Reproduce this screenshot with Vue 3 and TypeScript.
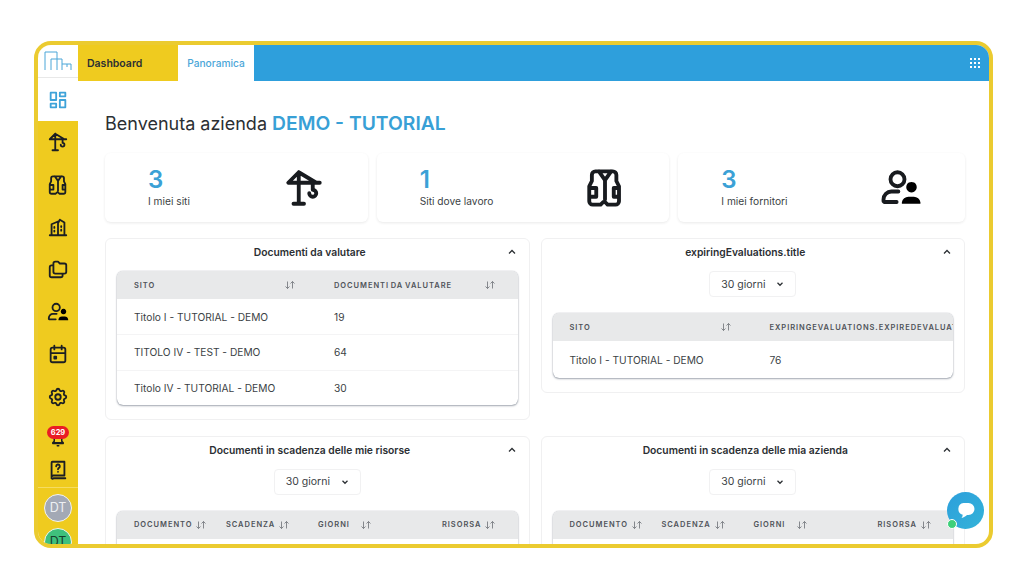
<script setup lang="ts">
interface Stat {
  value: number
  label: string
  icon: string
}

interface Column {
  label: string
  width: string
  headWidth: number
}

interface Panel {
  title: string
  filter: boolean
  columns: Column[]
  rows: string[][]
}

const icons: Record<string, string> = {
  dashboard: 'M4 4h6v8h-6z M4 16h6v4h-6z M14 12h6v8h-6z M14 4h6v4h-6z',
  crane: 'M6 21h6 M9 21v-18l-6 6h18 M9 3l10 6 M17 9v4a2 2 0 1 1 -2 2',
  vest: 'M7.5 2.5h9a2 2 0 0 1 2 2v3.500l1.500 3v8.500a2 2 0 0 1 -2 2h-4.500l-1.500 -1.500h-1l-1.500 1.500h-4.500a2 2 0 0 1 -2 -2v-8.500l1.500 -3v-3.500a2 2 0 0 1 2 -2z M8.500 2.500l3.500 5l3.500 -5 M12 7.500v11 M4 12h3v5h-3 M20 12h-3v5h3',
  building: 'M3 21h18 M5 21v-12l7-3v15 M12 8l2-4l5 3v14 M8 12v1 M8 16v1 M15.5 11v1 M15.5 15v1',
  folders: 'M9 4h3l2 2h5a2 2 0 0 1 2 2v7a2 2 0 0 1 -2 2h-10a2 2 0 0 1 -2 -2v-9a2 2 0 0 1 2 -2 M17 17v2a2 2 0 0 1 -2 2h-10a2 2 0 0 1 -2 -2v-9a2 2 0 0 1 2 -2h2',
  person: 'M6 7a4 4 0 1 0 8 0a4 4 0 1 0 -8 0 M2 19.500v-1a4.500 4.500 0 0 1 4.500 -4.500h4 M2.500 20h7',
  calendar: 'M4 7a2 2 0 0 1 2 -2h12a2 2 0 0 1 2 2v12a2 2 0 0 1 -2 2h-12a2 2 0 0 1 -2 -2z M16 3v4 M8 3v4 M4 11h16 M8 15h2v2h-2z',
  gear: 'M10.325 4.317c.426 -1.756 2.924 -1.756 3.35 0a1.724 1.724 0 0 0 2.573 1.066c1.543 -.94 3.31 .826 2.37 2.37a1.724 1.724 0 0 0 1.065 2.572c1.756 .426 1.756 2.924 0 3.35a1.724 1.724 0 0 0 -1.066 2.573c.94 1.543 -.826 3.31 -2.37 2.37a1.724 1.724 0 0 0 -2.572 1.065c-.426 1.756 -2.924 1.756 -3.35 0a1.724 1.724 0 0 0 -2.573 -1.066c-1.543 .94 -3.31 -.826 -2.37 -2.37a1.724 1.724 0 0 0 -1.065 -2.572c-1.756 -.426 -1.756 -2.924 0 -3.35a1.724 1.724 0 0 0 1.066 -2.573c-.94 -1.543 .826 -3.31 2.37 -2.37c1 .608 2.296 .07 2.572 -1.065z M9 12a3 3 0 1 0 6 0a3 3 0 0 0 -6 0',
  bell: 'M7 9v6l-2 2h14l-2-2v-6 M5 18h14 M11 21h2',
  book: 'M5 20v-16a1 1 0 0 1 1 -1h13v15h-12a2 2 0 0 0 -2 2a1 1 0 0 0 2 1h13 M10 8a2 2 0 1 1 3 1.700c-.7 .4 -1 .8 -1 1.600 M12 14v.01',
  sort: 'M3 15l4 4l4 -4 M7 19v-14 M13 9l4 -4l4 4 M17 5v14',
  chevronUp: 'M6 15l6 -6l6 6',
  chevronDown: 'M6 9l6 6l6 -6',
}

const personSolid = 'M18 8.500a3 3 0 1 1 -.01 0z M12.500 21v-.8a3.800 3.800 0 0 1 3.800 -3.200h3a3.800 3.800 0 0 1 3.800 3.200v.8z'

const navIcons = ['crane', 'vest', 'building', 'folders', 'person', 'calendar', 'gear']

const stats: Stat[] = [
  { value: 3, label: 'I miei siti', icon: 'crane' },
  { value: 1, label: 'Siti dove lavoro', icon: 'vest' },
  { value: 3, label: 'I miei fornitori', icon: 'person' },
]

const sitoColumns = (second: string): Column[] => [
  { label: 'SITO', width: '200px', headWidth: 162 },
  { label: second, width: '1fr', headWidth: 162 },
]

const scadenzaColumns: Column[] = [
  { label: 'DOCUMENTO', width: '92px', headWidth: 73 },
  { label: 'SCADENZA', width: '92px', headWidth: 64 },
  { label: 'GIORNI', width: '124px', headWidth: 54 },
  { label: 'RISORSA', width: '1fr', headWidth: 54 },
]

const panels: Panel[] = [
  {
    title: 'Documenti da valutare',
    filter: false,
    columns: sitoColumns('DOCUMENTI DA VALUTARE'),
    rows: [
      ['Titolo I - TUTORIAL - DEMO', '19'],
      ['TITOLO IV - TEST - DEMO', '64'],
      ['Titolo IV - TUTORIAL - DEMO', '30'],
    ],
  },
  {
    title: 'expiringEvaluations.title',
    filter: true,
    columns: [
      { label: 'SITO', width: '200px', headWidth: 162 },
      { label: 'EXPIRINGEVALUATIONS.EXPIREDEVALUATIONS', width: '1fr', headWidth: 260 },
    ],
    rows: [['Titolo I - TUTORIAL - DEMO', '76']],
  },
  {
    title: 'Documenti in scadenza delle mie risorse',
    filter: true,
    columns: scadenzaColumns,
    rows: [[]],
  },
  {
    title: 'Documenti in scadenza delle mia azienda',
    filter: true,
    columns: scadenzaColumns,
    rows: [[]],
  },
]

const gridTemplate = (columns: Column[]) => columns.map((c) => c.width).join(' ')
const dots = [0, 1, 2]
</script>

<template>
  <div class="page">
    <div class="frame">
      <aside class="sidebar">
        <div class="logo">
          <svg width="28" height="20" viewBox="0 0 28 20" fill="none" stroke="#4ba6d8" stroke-width="1">
            <path d="M1 19V1h12v18 M7 19V8h11v11 M18 13h9v6 M23 13v3" />
          </svg>
        </div>
        <div class="nav-active">
          <svg class="nav-icon active-icon" viewBox="0 0 24 24"><path :d="icons.dashboard" /></svg>
        </div>
        <div v-for="name in navIcons" :key="name" class="nav-item">
          <svg class="nav-icon" viewBox="0 0 24 24">
            <path :d="icons[name]" />
            <path v-if="name === 'person'" class="solid" :d="personSolid" />
          </svg>
        </div>
        <div class="nav-item nav-bell">
          <svg class="nav-icon" viewBox="0 0 24 24"><path :d="icons.bell" /></svg>
          <span class="badge">629</span>
        </div>
        <div class="nav-item nav-book">
          <svg class="nav-icon" viewBox="0 0 24 24"><path :d="icons.book" /></svg>
        </div>
        <div class="avatars">
          <span class="avatar grey">DT</span>
          <span class="avatar green">DT</span>
        </div>
      </aside>

      <div class="main">
        <header class="topbar">
          <div class="crumb">Dashboard</div>
          <div class="tab">Panoramica</div>
          <div class="topbar-fill">
            <svg width="10" height="10" viewBox="0 0 10 10" fill="#fff">
              <template v-for="y in dots" :key="y">
                <rect v-for="x in dots" :key="x" :x="x * 4" :y="y * 4" width="2" height="2" />
              </template>
            </svg>
          </div>
        </header>

        <main class="content">
          <h1 class="welcome">Benvenuta azienda <strong>DEMO - TUTORIAL</strong></h1>

          <section class="stats">
            <div v-for="stat in stats" :key="stat.label" class="stat-card">
              <div>
                <div class="stat-value">{{ stat.value }}</div>
                <div class="stat-label">{{ stat.label }}</div>
              </div>
              <svg class="stat-icon" viewBox="0 0 24 24">
                <path :d="icons[stat.icon]" />
                <path v-if="stat.icon === 'person'" class="solid" :d="personSolid" />
              </svg>
            </div>
          </section>

          <section class="panels">
            <div v-for="panel in panels" :key="panel.title" class="panel">
              <div class="panel-head">
                <span class="panel-title">{{ panel.title }}</span>
                <svg class="chevron-up" viewBox="0 0 24 24"><path :d="icons.chevronUp" /></svg>
              </div>
              <div v-if="panel.filter" class="filter">
                <div class="select">
                  <span>30 giorni</span>
                  <svg class="chevron-down" viewBox="0 0 24 24"><path :d="icons.chevronDown" /></svg>
                </div>
              </div>
              <div class="table">
                <div class="table-header" :style="{ gridTemplateColumns: gridTemplate(panel.columns) }">
                  <div v-for="column in panel.columns" :key="column.label" class="th-cell">
                    <div class="th" :style="{ width: column.headWidth + 'px' }">
                      <span>{{ column.label }}</span>
                      <svg class="sort" viewBox="0 0 24 24"><path :d="icons.sort" /></svg>
                    </div>
                  </div>
                </div>
                <div
                  v-for="(row, r) in panel.rows"
                  :key="r"
                  class="table-row"
                  :style="{ gridTemplateColumns: gridTemplate(panel.columns) }"
                >
                  <div v-for="(cell, c) in row" :key="c" class="td">{{ cell }}</div>
                </div>
              </div>
            </div>
          </section>
        </main>
      </div>
    </div>

    <div class="chat">
      <svg width="18" height="17" viewBox="0 0 18 17" fill="#fff">
        <path d="M6.500 1h5a6 6 0 0 1 0 12h-1.500c-1.500 1.500-3.200 2.400-5.500 3c.8-.9 1.200-2 1.200-3.300a6 6 0 0 1 .8-11.700z" />
      </svg>
      <span class="chat-dot"></span>
    </div>
  </div>
</template>

<style>
html,
body {
  margin: 0;
  background: #fff;
}
</style>

<style scoped>
.page {
  position: relative;
  width: 1024px;
  height: 576px;
  overflow: hidden;
  padding: 41px 31px 28px 34px;
  box-sizing: border-box;
  font-family: Inter, "Liberation Sans", sans-serif;
  color: #2b2f33;
}

.frame {
  display: flex;
  height: 100%;
  border: 4px solid #ebcb30;
  border-radius: 17px;
  overflow: hidden;
  background: #fff;
  box-sizing: border-box;
}

.sidebar {
  display: flex;
  flex-direction: column;
  flex: 0 0 40px;
  background: #efcb1f;
}

.logo {
  display: flex;
  align-items: center;
  justify-content: center;
  height: 33px;
  flex: none;
  background: #fff;
  border-bottom: 1px solid #e8e8e8;
  box-sizing: border-box;
}

.nav-active {
  display: flex;
  align-items: center;
  justify-content: center;
  height: 43px;
  flex: none;
  background: #fff;
}

.nav-item {
  position: relative;
  display: flex;
  align-items: center;
  justify-content: center;
  height: 42.4px;
  flex: none;
}

.nav-icon {
  width: 22px;
  height: 22px;
  fill: none;
  stroke: #1c1f23;
  stroke-width: 2;
  stroke-linecap: round;
  stroke-linejoin: round;
}

.active-icon {
  stroke: #3ea3d9;
}

.solid {
  fill: #000;
  stroke: none;
}

.nav-bell {
  height: 36px;
  padding-top: 6px;
  box-sizing: border-box;
}

.nav-bell .nav-icon {
  width: 18px;
  height: 18px;
}

.nav-book {
  height: 33px;
}

.badge {
  position: absolute;
  left: 9px;
  top: 8px;
  width: 22px;
  height: 13px;
  border-radius: 6.5px;
  background: #ea1c24;
  color: #fff;
  font-size: 7.5px;
  font-weight: 700;
  line-height: 13px;
  text-align: center;
}

.avatars {
  display: flex;
  flex-direction: column;
  align-items: center;
  gap: 6px;
  padding-top: 6px;
  border-top: 1px solid #f5dc62;
}

.avatar {
  display: flex;
  align-items: center;
  justify-content: center;
  flex: none;
  width: 26px;
  height: 26px;
  border: 1px solid #f4f4f0;
  border-radius: 50%;
  font-size: 12.5px;
}

.grey {
  background: #a3a9b5;
  color: #eef0f3;
}

.green {
  background: #3fc07c;
  color: #17402c;
}

.main {
  display: flex;
  flex-direction: column;
  flex: 1;
  min-width: 0;
}

.topbar {
  display: flex;
  flex: 0 0 36px;
}

.crumb {
  display: flex;
  align-items: center;
  flex: 0 0 100px;
  padding-left: 9px;
  background: #efcb1f;
  font-size: 10.5px;
  font-weight: 600;
  box-sizing: border-box;
}

.tab {
  display: flex;
  align-items: center;
  justify-content: center;
  flex: 0 0 76px;
  color: #4ba6d8;
  font-size: 10.2px;
  font-weight: 500;
}

.topbar-fill {
  display: flex;
  align-items: center;
  justify-content: flex-end;
  flex: 1;
  padding-right: 9px;
  background: #2e9fdc;
}

.content {
  padding: 30px 24px 0 27px;
}

.welcome {
  height: 26px;
  margin: 0 0 16px;
  font-size: 18px;
  font-weight: 400;
  line-height: 26px;
}

.welcome strong {
  color: #38a0d6;
  font-size: 19.3px;
  font-weight: 600;
  line-height: 1;
}

.stats {
  display: grid;
  grid-template-columns: 263fr 293fr 287fr;
  gap: 9px;
  margin-bottom: 16px;
}

.stat-card {
  display: flex;
  align-items: center;
  justify-content: space-between;
  height: 69px;
  padding: 0 43px 0 43px;
  border-radius: 6px;
  box-shadow: 0 1px 3px rgba(0, 0, 0, 0.09);
  box-sizing: border-box;
}

.stat-value {
  color: #3ba1d6;
  font-size: 24px;
  font-weight: 600;
  line-height: 28px;
}

.stat-label {
  margin-bottom: 2px;
  color: #3b3f45;
  font-size: 10.2px;
  line-height: 14px;
}

.stat-icon {
  width: 42px;
  height: 42px;
  fill: none;
  stroke: #181b1f;
  stroke-width: 2.2;
  stroke-linecap: round;
  stroke-linejoin: round;
}

.panels {
  display: grid;
  grid-template-columns: 424.5px 424.5px;
  gap: 16px 11px;
  align-items: start;
}

.panel {
  padding: 0 11px 14px;
  border: 1px solid #f0f0f1;
  border-radius: 6px;
  box-sizing: border-box;
}

.panel-head {
  display: flex;
  align-items: center;
  height: 32px;
  padding-bottom: 6px;
  box-sizing: border-box;
}

.panel-title {
  flex: 1;
  font-size: 10.3px;
  font-weight: 600;
  text-align: center;
}

.chevron-up {
  flex: none;
  width: 12px;
  height: 12px;
  margin-left: 3px;
  fill: none;
  stroke: #2b2f33;
  stroke-width: 2.5;
}

.filter {
  display: flex;
  justify-content: center;
  margin-bottom: 16px;
}

.select {
  display: flex;
  align-items: center;
  justify-content: space-between;
  width: 87px;
  height: 26px;
  padding: 0 10px 0 11px;
  border: 1px solid #f1f1f2;
  border-radius: 4px;
  font-size: 10.5px;
  color: #3b3f45;
  box-sizing: border-box;
}

.chevron-down {
  width: 10px;
  height: 10px;
  fill: none;
  stroke: #2b2f33;
  stroke-width: 3;
}

.table {
  overflow: hidden;
  border-radius: 6px;
  box-shadow: 0 1px 2px rgba(60, 70, 90, 0.45), 0 0 1px rgba(60, 70, 90, 0.5);
}

.table-header {
  display: grid;
  align-items: center;
  height: 28px;
  padding-left: 17px;
  background: #e8e9ea;
}

.th-cell {
  min-width: 0;
}

.th {
  display: flex;
  align-items: center;
  justify-content: space-between;
  color: #4f5359;
  font-size: 7.5px;
  font-weight: 600;
  letter-spacing: 0.95px;
  word-spacing: -1px;
  white-space: nowrap;
}

.sort {
  flex: none;
  width: 12px;
  height: 12px;
  fill: none;
  stroke: #6b6f75;
  stroke-width: 1.6;
}

.table-row {
  display: grid;
  align-items: center;
  height: 35.3px;
  padding-left: 17px;
  border-top: 1px solid #f4f4f5;
  box-sizing: border-box;
}

.table-header + .table-row {
  border-top: none;
}

.table-header + .table-row:last-child {
  height: 37px;
}

.td {
  font-size: 10.2px;
  color: #3b3f45;
}

.chat {
  position: absolute;
  left: 947px;
  top: 492px;
  display: flex;
  align-items: center;
  justify-content: center;
  width: 37px;
  height: 37px;
  border-radius: 50%;
  background: linear-gradient(135deg, #2d9fdc, #33b3d8);
}

.chat-dot {
  position: absolute;
  left: 0;
  bottom: 0;
  width: 8px;
  height: 8px;
  border: 1px solid #fff;
  border-radius: 50%;
  background: #3ed07a;
}
</style>
